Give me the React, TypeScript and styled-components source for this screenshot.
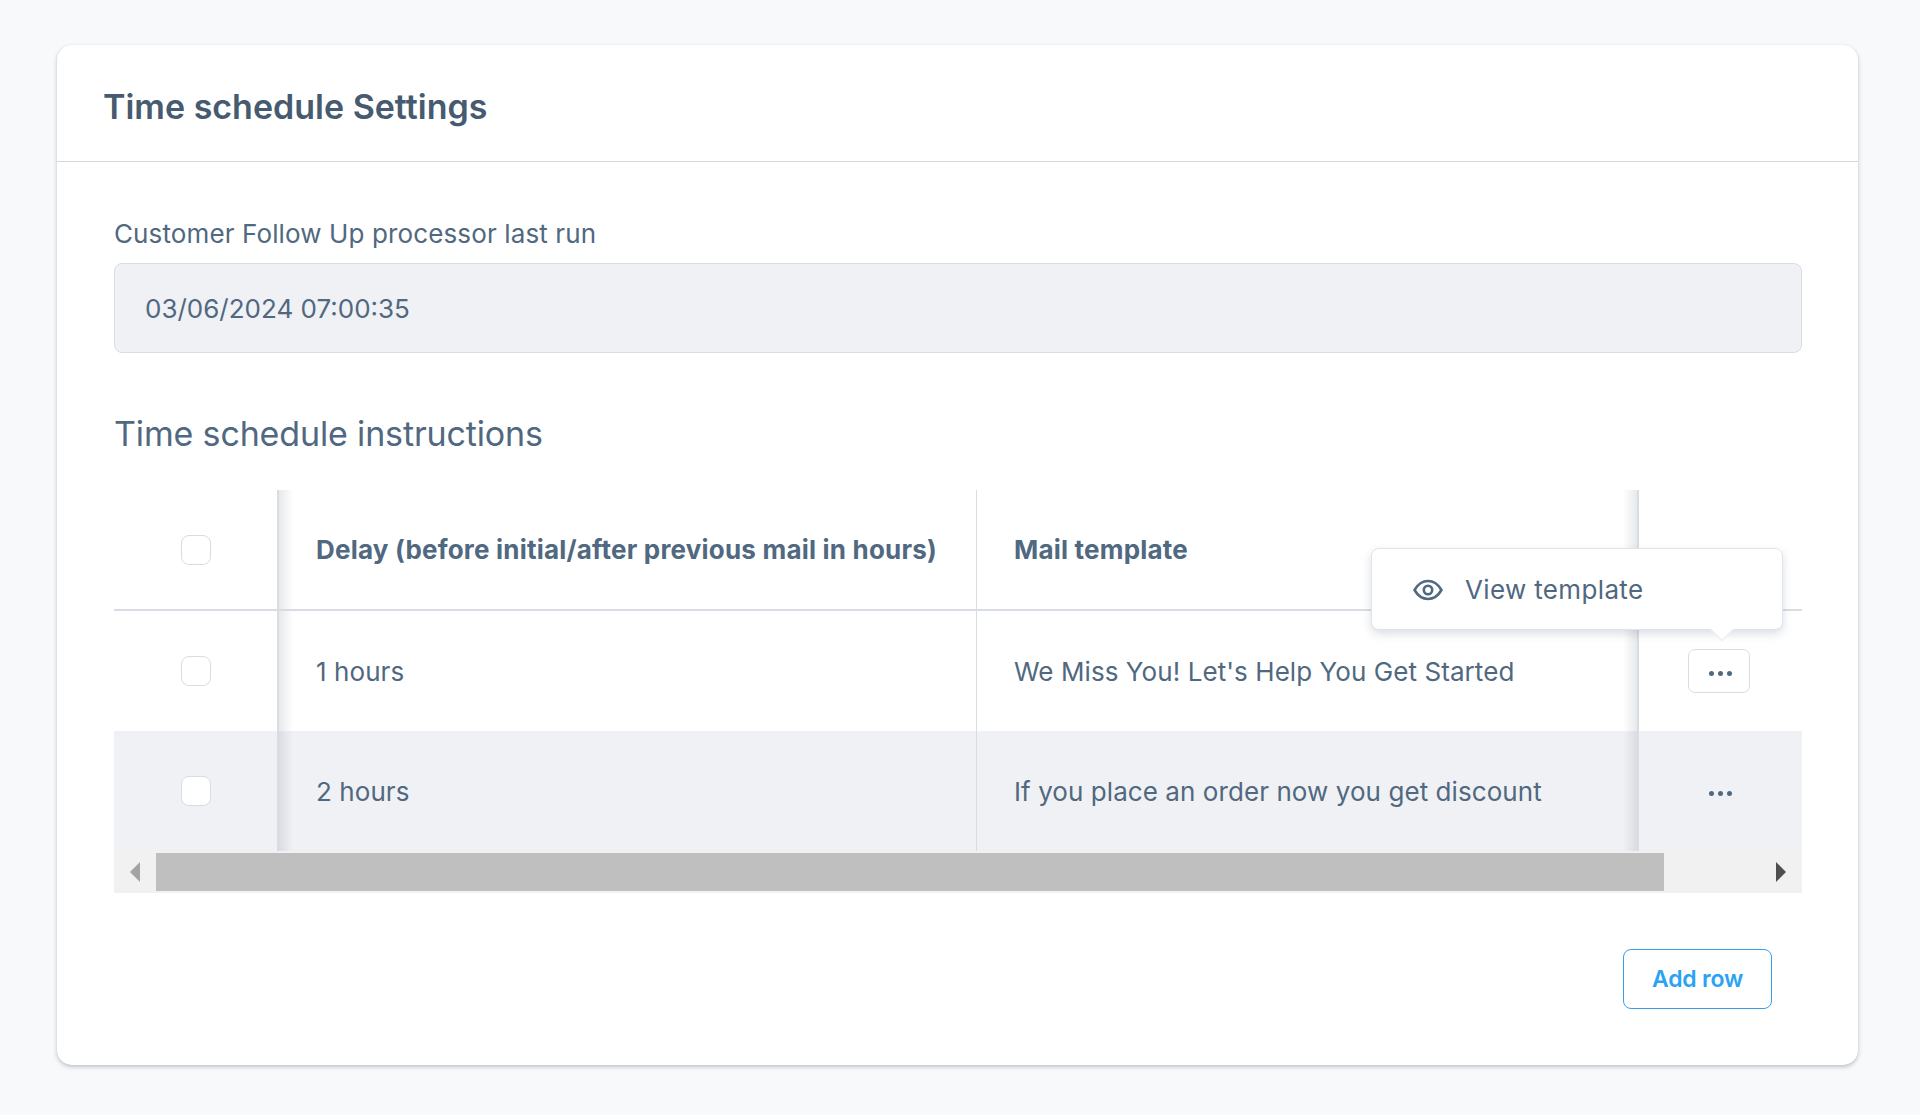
import React from "react";
import styled, { createGlobalStyle } from "styled-components";

const GlobalStyle = createGlobalStyle`
  html, body {
    margin: 0;
    background: #f8f9fb;
    font-family: Inter, "Noto Sans", sans-serif;
    color: #506880;
  }
  * { box-sizing: border-box; }
`;

const Page = styled.div`
  width: 1920px;
  height: 1115px;
  padding: 45px 62px 0 57px;
`;

const Card = styled.section`
  height: 1020px;
  background: #fff;
  border-radius: 15px;
  box-shadow: 0 2px 4px rgba(60, 70, 85, 0.3), 0 0 2px rgba(60, 70, 85, 0.06);
`;

const CardHeader = styled.header`
  height: 117px;
  padding: 7px 0 0 46px;
  display: flex;
  align-items: center;
  border-bottom: 1px solid #d3d8df;
`;

const CardTitle = styled.h1`
  margin: 0;
  font-size: 34px;
  font-weight: 600;
  color: #465a70;
`;

const CardBody = styled.div`
  padding: 56px 56px 0 57px;
`;

const FieldLabel = styled.label`
  display: block;
  font-size: 26px;
  line-height: 32px;
  letter-spacing: 0.12px;
  margin-bottom: 13px;
`;

const ReadOnlyInput = styled.div`
  height: 90px;
  padding-left: 30px;
  display: flex;
  align-items: center;
  font-size: 26px;
  background: #f0f1f5;
  border: 1px solid #d8dde4;
  border-radius: 8px;
`;

const SectionTitle = styled.h2`
  margin: 60px 0 35px;
  font-size: 34px;
  line-height: 42px;
  font-weight: 400;
  letter-spacing: -0.15px;
`;

const TableWrap = styled.div`
  position: relative;
`;

const Row = styled.div<{ $striped?: boolean; $head?: boolean }>`
  display: grid;
  grid-template-columns: 165px 698px 662px 163px;
  height: ${(p) => (p.$head ? "121px" : "120px")};
  background: ${(p) => (p.$striped ? "#f0f1f5" : "#fff")};
  border-bottom: ${(p) => (p.$head ? "2px solid #d8dde4" : "none")};
`;

const CheckCell = styled.div`
  position: relative;
  display: flex;
  align-items: center;
  justify-content: center;
  border-right: 2px solid #d8dde4;
  &::after {
    content: "";
    position: absolute;
    top: 0;
    bottom: 0;
    left: 100%;
    width: 14px;
    margin-left: 2px;
    background: linear-gradient(to right, rgba(60, 70, 90, 0.12), rgba(60, 70, 90, 0));
  }
`;

const Checkbox = styled.span`
  width: 30px;
  height: 30px;
  background: #fff;
  border: 1px solid #d8dde4;
  border-radius: 8px;
`;

const Cell = styled.div<{ $head?: boolean; $divider?: boolean; $fixed?: boolean }>`
  position: relative;
  display: flex;
  align-items: center;
  padding-left: 37px;
  font-size: 26px;
  letter-spacing: 0.07px;
  font-weight: ${(p) => (p.$head ? 700 : 400)};
  border-right: ${(p) =>
    p.$divider ? "1px solid #d8dde4" : p.$fixed ? "2px solid #d8dde4" : "none"};
  &::after {
    content: ${(p) => (p.$fixed ? '""' : "none")};
    position: absolute;
    top: 0;
    bottom: 0;
    right: 0;
    width: 14px;
    background: linear-gradient(to left, rgba(60, 70, 90, 0.12), rgba(60, 70, 90, 0));
  }
`;

const HeadLabel = styled.span`
  letter-spacing: 0.2px;
`;

const ActionCell = styled.div`
  display: flex;
  align-items: center;
  justify-content: center;
`;

const DotsButton = styled.button<{ $outlined?: boolean }>`
  width: 62px;
  height: 44px;
  padding: 4px 0 0 2px;
  display: flex;
  align-items: center;
  justify-content: center;
  gap: 4px;
  margin-right: 3px;
  background: ${(p) => (p.$outlined ? "#fff" : "transparent")};
  border: 1px solid ${(p) => (p.$outlined ? "#d8dde4" : "transparent")};
  border-radius: 7px;
`;

const Dot = styled.i`
  width: 5px;
  height: 5px;
  border-radius: 50%;
  background: #506880;
`;

const Popover = styled.div`
  position: absolute;
  left: 1257px;
  top: 58px;
  width: 412px;
  height: 82px;
  padding: 1px 0 0 41px;
  display: flex;
  align-items: center;
  gap: 22px;
  font-size: 26px;
  letter-spacing: 0.35px;
  background: #fff;
  border: 1px solid #e0e4ea;
  border-radius: 8px;
  box-shadow: 0 4px 10px rgba(70, 90, 115, 0.2);
  &::after {
    content: "";
    position: absolute;
    left: 342px;
    bottom: -9px;
    width: 15px;
    height: 15px;
    background: #fff;
    transform: rotate(45deg);
    border-right: 1px solid #e6e9ee;
    border-bottom: 1px solid #e6e9ee;
  }
`;

const ScrollBar = styled.div`
  height: 42px;
  padding: 2px 0;
  display: flex;
  align-items: center;
  background: #f1f1f1;
`;

const ScrollArrow = styled.span<{ $dir: "left" | "right"; $dark?: boolean }>`
  width: 42px;
  flex: none;
  display: flex;
  justify-content: center;
  &::before {
    content: "";
    border-top: 10px solid transparent;
    border-bottom: 10px solid transparent;
    ${(p) =>
      p.$dir === "left"
        ? `border-right: 10px solid ${p.$dark ? "#4f4f4f" : "#a3a3a3"};`
        : `border-left: 10px solid ${p.$dark ? "#4f4f4f" : "#a3a3a3"};`}
  }
`;

const ScrollTrack = styled.div`
  flex: 1;
  height: 100%;
  display: flex;
`;

const ScrollThumb = styled.div`
  width: 1508px;
  background: #bfbfbf;
`;

const Footer = styled.div`
  display: flex;
  justify-content: flex-end;
  padding: 56px 30px 0 0;
`;

const AddButton = styled.button`
  width: 149px;
  height: 60px;
  font-family: inherit;
  font-size: 23px;
  font-weight: 600;
  letter-spacing: -0.2px;
  color: #2aa3f5;
  background: #fff;
  border: 1.5px solid #3a9ee6;
  border-radius: 8px;
`;

const EyeIcon = () => (
  <svg width="30" height="22" viewBox="0 0 30 22" fill="none" stroke="#506880" strokeWidth="2.6">
    <path d="M1.5 11C5 5 9.5 2 15 2s10 3 13.5 9C25 17 20.5 20 15 20S5 17 1.5 11Z" strokeLinejoin="round" />
    <circle cx="15" cy="11" r="4.2" />
  </svg>
);

const Dots = ({ outlined }: { outlined?: boolean }) => (
  <DotsButton $outlined={outlined}>
    <Dot />
    <Dot />
    <Dot />
  </DotsButton>
);

const rows = [
  { delay: "1 hours", template: "We Miss You! Let's Help You Get Started" },
  { delay: "2 hours", template: "If you place an order now you get discount" },
];

export default function App() {
  return (
    <Page>
      <GlobalStyle />
      <Card>
        <CardHeader>
          <CardTitle>Time schedule Settings</CardTitle>
        </CardHeader>
        <CardBody>
          <FieldLabel>Customer Follow Up processor last run</FieldLabel>
          <ReadOnlyInput>03/06/2024 07:00:35</ReadOnlyInput>
          <SectionTitle>Time schedule instructions</SectionTitle>
          <TableWrap>
            <Row $head>
              <CheckCell>
                <Checkbox />
              </CheckCell>
              <Cell $head $divider>
                <HeadLabel>Delay (before initial/after previous mail in hours)</HeadLabel>
              </Cell>
              <Cell $head $fixed>
                <HeadLabel>Mail template</HeadLabel>
              </Cell>
              <ActionCell />
            </Row>
            {rows.map((r, i) => (
              <Row key={r.delay} $striped={i === 1}>
                <CheckCell>
                  <Checkbox />
                </CheckCell>
                <Cell $divider>{r.delay}</Cell>
                <Cell $fixed>{r.template}</Cell>
                <ActionCell>
                  <Dots outlined={i === 0} />
                </ActionCell>
              </Row>
            ))}
            <ScrollBar>
              <ScrollArrow $dir="left" />
              <ScrollTrack>
                <ScrollThumb />
              </ScrollTrack>
              <ScrollArrow $dir="right" $dark />
            </ScrollBar>
            <Popover>
              <EyeIcon />
              View template
            </Popover>
          </TableWrap>
          <Footer>
            <AddButton>Add row</AddButton>
          </Footer>
        </CardBody>
      </Card>
    </Page>
  );
}
